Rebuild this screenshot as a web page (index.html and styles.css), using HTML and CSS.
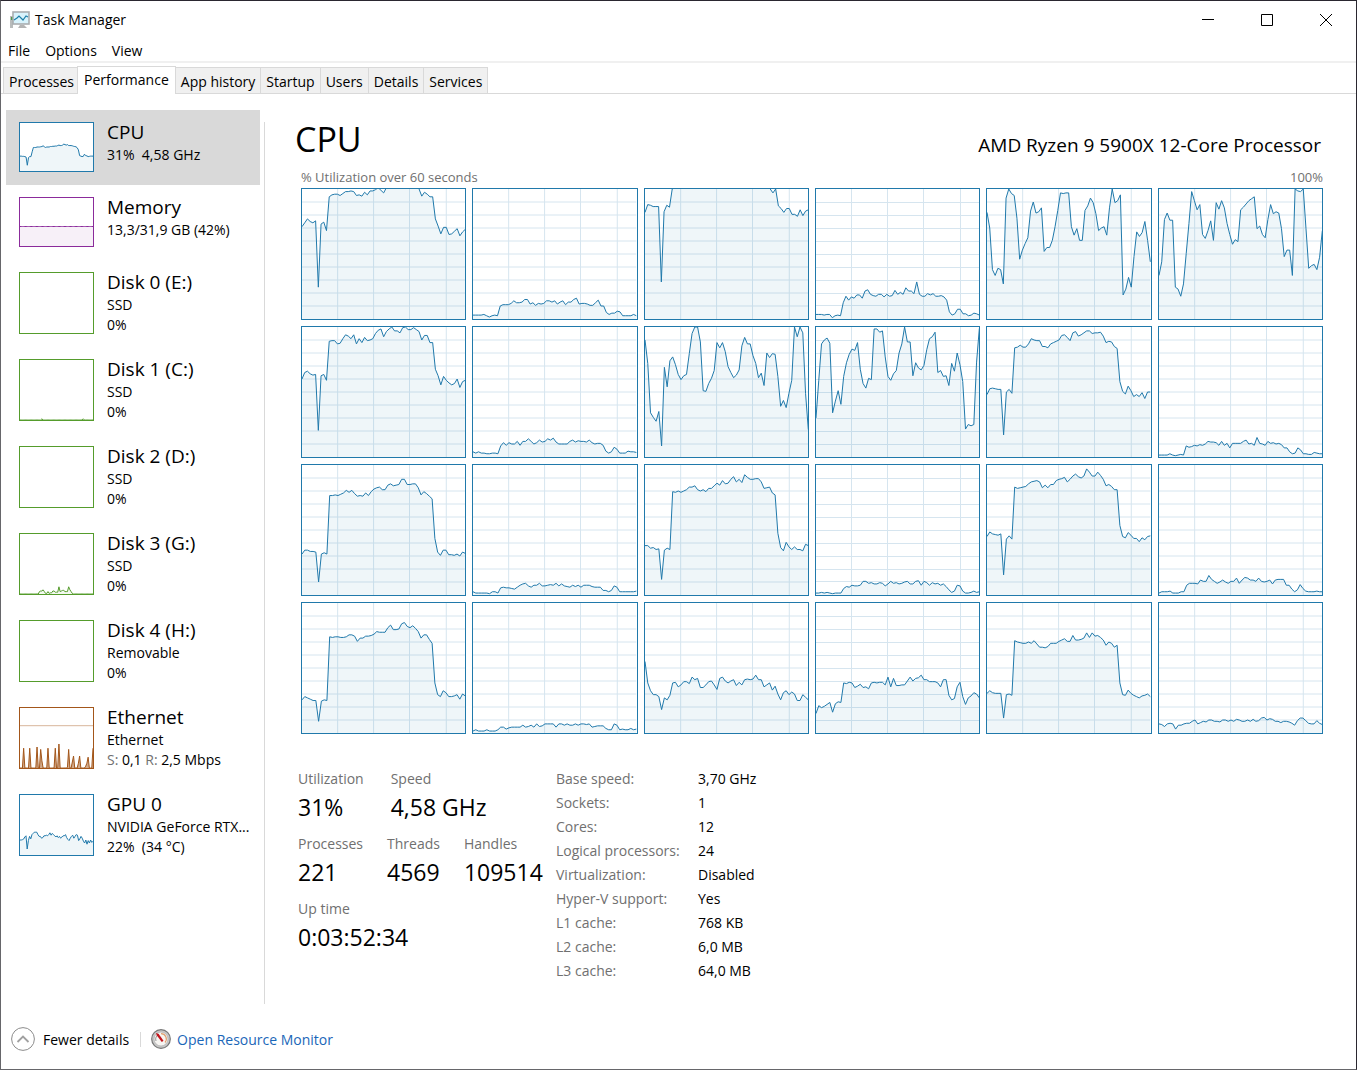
FILE: index.html
```html
<!DOCTYPE html>
<html lang="en">
<head>
    <meta charset="utf-8">
    <meta name="viewport" content="width=device-width, initial-scale=1.0">
    <title>Task Manager</title>
    <link rel="stylesheet" href="styles.css">
</head>
<body>
<div class="window">
    <header class="titlebar">
        <svg class="app-icon" width="20" height="18" viewBox="0 0 20 18">
            <rect x="0" y="5" width="3" height="12" fill="#b9bcbc"/>
            <rect x="1" y="6" width="2" height="3" fill="#4f9a4a"/>
            <path d="M8 17l2-3h4l3 3z" fill="#b4b4b4"/>
            <rect x="3" y="1" width="16" height="12" fill="#d8f3fc" stroke="#a9adb0" stroke-width="1.6"/>
            <path d="M4 9l3-2 2-2 4 4 3-4 2 1" fill="none" stroke="#1c7fa8" stroke-width="1.2"/>
        </svg>
        <span>Task Manager</span>
        <div class="controls">
            <button aria-label="Minimize"><svg width="12" height="12"><path d="M0 5.5h12"/></svg></button>
            <button aria-label="Maximize"><svg width="12" height="12"><path d="M.5.5h11v11H.5z"/></svg></button>
            <button aria-label="Close"><svg width="12" height="12"><path d="M0 0l12 12M12 0L0 12"/></svg></button>
        </div>
    </header>

    <nav class="menu">
        <button>File</button>
        <button>Options</button>
        <button>View</button>
    </nav>

    <div class="tabs" role="tablist">
        <button role="tab">Processes</button>
        <button role="tab" class="active" aria-selected="true">Performance</button>
        <button role="tab">App history</button>
        <button role="tab">Startup</button>
        <button role="tab">Users</button>
        <button role="tab">Details</button>
        <button role="tab">Services</button>
    </div>

    <div class="content">
        <aside class="sidebar">
            <button class="item selected">
                <svg class="thumb short blue" data-graph="cpu"></svg>
                <span class="info"><span class="name">CPU</span><span>31%&nbsp; 4,58 GHz</span></span>
            </button>
            <button class="item">
                <svg class="thumb short purple" data-graph="memory"></svg>
                <span class="info"><span class="name">Memory</span><span>13,3/31,9 GB (42%)</span></span>
            </button>
            <button class="item">
                <svg class="thumb green"></svg>
                <span class="info"><span class="name">Disk 0 (E:)</span><span>SSD</span><span>0%</span></span>
            </button>
            <button class="item">
                <svg class="thumb green" data-graph="disk1"></svg>
                <span class="info"><span class="name">Disk 1 (C:)</span><span>SSD</span><span>0%</span></span>
            </button>
            <button class="item">
                <svg class="thumb green"></svg>
                <span class="info"><span class="name">Disk 2 (D:)</span><span>SSD</span><span>0%</span></span>
            </button>
            <button class="item">
                <svg class="thumb green" data-graph="disk3"></svg>
                <span class="info"><span class="name">Disk 3 (G:)</span><span>SSD</span><span>0%</span></span>
            </button>
            <button class="item">
                <svg class="thumb green"></svg>
                <span class="info"><span class="name">Disk 4 (H:)</span><span>Removable</span><span>0%</span></span>
            </button>
            <button class="item">
                <svg class="thumb brown" data-graph="ethernet"></svg>
                <span class="info"><span class="name">Ethernet</span><span>Ethernet</span><span><i>S:</i> 0,1 <i>R:</i> 2,5 Mbps</span></span>
            </button>
            <button class="item">
                <svg class="thumb blue" data-graph="gpu"></svg>
                <span class="info"><span class="name">GPU 0</span><span>NVIDIA GeForce RTX...</span><span>22%&nbsp; (34 °C)</span></span>
            </button>
        </aside>

        <main class="main">
            <div class="heading">
                <h1>CPU</h1>
                <h2>AMD Ryzen 9 5900X 12-Core Processor</h2>
            </div>
            <div class="scale">
                <span>% Utilization over 60 seconds</span>
                <span>100%</span>
            </div>
            <div class="cores" id="cores"></div>

            <div class="details">
                <div class="stats">
                    <div class="stats-row">
                        <dl><dt>Utilization</dt><dd>31%</dd></dl>
                        <dl><dt>Speed</dt><dd>4,58 GHz</dd></dl>
                    </div>
                    <div class="stats-row">
                        <dl><dt>Processes</dt><dd>221</dd></dl>
                        <dl><dt>Threads</dt><dd>4569</dd></dl>
                        <dl><dt>Handles</dt><dd>109514</dd></dl>
                    </div>
                    <div class="stats-row">
                        <dl><dt>Up time</dt><dd>0:03:52:34</dd></dl>
                    </div>
                </div>
                <table class="specs">
                    <tr><th scope="row">Base speed:</th><td>3,70 GHz</td></tr>
                    <tr><th scope="row">Sockets:</th><td>1</td></tr>
                    <tr><th scope="row">Cores:</th><td>12</td></tr>
                    <tr><th scope="row">Logical processors:</th><td>24</td></tr>
                    <tr><th scope="row">Virtualization:</th><td>Disabled</td></tr>
                    <tr><th scope="row">Hyper-V support:</th><td>Yes</td></tr>
                    <tr><th scope="row">L1 cache:</th><td>768 KB</td></tr>
                    <tr><th scope="row">L2 cache:</th><td>6,0 MB</td></tr>
                    <tr><th scope="row">L3 cache:</th><td>64,0 MB</td></tr>
                </table>
            </div>
        </main>
    </div>

    <footer class="footer">
        <button class="fewer">
            <svg width="24" height="24" viewBox="0 0 24 24" fill="none">
                <circle cx="12" cy="12" r="11.4" stroke="#8c8c8c"/>
                <path d="M6.500 15l5.500-5.500 5.500 5.500" stroke="#a0a0a0" stroke-width="1.8"/>
            </svg>
            <span>Fewer details</span>
        </button>
        <a class="resmon" href="#">
            <svg width="20" height="20" viewBox="0 0 20 20">
                <circle cx="10" cy="10" r="9.300" fill="#c9c9c9" stroke="#777" stroke-width="1.2"/>
                <circle cx="10" cy="10" r="7" fill="#f7f5f2" stroke="#a5a5a5" stroke-width=".6"/>
                <path d="M5 12a5.300 5.300 0 0 1 3-6.800" fill="none" stroke="#999" stroke-width="1"/>
                <path d="M10 4.700a5.300 5.300 0 0 1 4 8.800" fill="none" stroke="#e0a070" stroke-width="1.2"/>
                <path d="M5 4l2.500.800 5 7-1.700 1.200-5-6.500z" fill="#c3141c"/>
            </svg>
            <span>Open Resource Monitor</span>
        </a>
    </footer>
</div>
<script src="graphs.js"></script>
</body>
</html>
```
FILE: styles.css
```css
* {
    box-sizing: border-box;
}

body {
    margin: 0;
    font-family: "Open Sans", "Segoe UI", sans-serif;
    font-size: 14px;
    line-height: 20px;
    color: #000;
    background: #fff;
}

button {
    font: inherit;
    color: inherit;
    background: none;
    border: 0;
    padding: 0;
    text-align: left;
}

h1, h2, dl, dd {
    margin: 0;
    font-weight: normal;
}

.window {
    display: flex;
    flex-direction: column;
    min-height: 100vh;
    border: 1px solid #2a2730;
    border-left-color: #66666a;
    border-bottom-color: #66666a;
}

/* title bar and menu */

.titlebar, .menu, .tabs, .controls, .content, .item, .info,
.heading, .scale, .details, .stats, .stats-row, .footer, .fewer, .resmon {
    display: flex;
}

.titlebar {
    align-items: center;
    height: 37px;
    padding: 0 1px 0 9px;
    gap: 5px;
}

.controls {
    margin-left: auto;
}

.controls button {
    display: flex;
    align-items: center;
    justify-content: center;
    width: 59px;
    height: 37px;
}

.controls svg {
    fill: none;
    stroke: #000;
}

.menu {
    gap: 15px;
    height: 25px;
    padding: 3px 7px 0;
    border-bottom: 2px solid #f0f0f0;
}

/* tabs */

.tabs {
    align-items: flex-end;
    height: 31px;
    padding-left: 2px;
    border-bottom: 1px solid #d9d9d9;
}

.tabs button {
    height: 26px;
    padding: 2px 5px 0;
    border: 1px solid #d9d9d9;
    border-left-width: 0;
    border-bottom: 0;
    background: #f0f0f0;
}

.tabs button:first-child {
    padding-right: 3px;
    border-left-width: 1px;
    border-right-width: 0;
}

.tabs .active {
    height: 28px;
    padding: 0 6px 2px;
    margin-bottom: -1px;
    border-left-width: 1px;
    background: #fff;
}

/* left column */

.content {
    flex: 1;
    padding-top: 16px;
}

.sidebar {
    width: 254px;
    margin: 0 4px 0 5px;
    flex-shrink: 0;
}

.item {
    width: 100%;
    gap: 13px;
    padding: 9px 0 13px 13px;
    align-items: flex-start;
}

.selected {
    background: #d9d9d9;
}

.info {
    flex-direction: column;
    margin-bottom: -1px;
    white-space: nowrap;
}

.name {
    font-size: 19px;
    line-height: 26px;
}

.info i {
    font-style: normal;
    color: #707070;
}

.thumb {
    width: 75px;
    height: 62px;
    margin-top: 3px;
    flex-shrink: 0;
    border: 1px solid;
    background: #fff;
}

.short {
    height: 50px;
}

.blue {
    color: #2079ab;
}

.purple {
    color: #8b2b9b;
}

.green {
    color: #559c2c;
}

.brown {
    color: #a3561a;
}

/* graphs */

.line {
    fill: none;
    stroke: currentColor;
    vector-effect: non-scaling-stroke;
}

.area {
    fill: currentColor;
    fill-opacity: 0.07;
}

.brown .area {
    fill-opacity: 0.5;
}

.limit {
    stroke: #d8b59a;
    vector-effect: non-scaling-stroke;
}

.cores {
    display: grid;
    grid-template-columns: repeat(6, 1fr);
    grid-auto-rows: 132px;
    gap: 6px;
    margin: 2px 0 0 5px;
}

.core {
    width: 100%;
    height: 100%;
    border: 1px solid;
}

.grid {
    fill: none;
    stroke: #d6e5ef;
    shape-rendering: crispEdges;
    vector-effect: non-scaling-stroke;
}

/* right side */

.main {
    flex: 1;
    margin-top: 12px;
    padding: 0 33px 0 30px;
    border-left: 1px solid #d9d9d9;
}

.heading {
    justify-content: space-between;
    align-items: baseline;
    padding-right: 2px;
}

.heading h1 {
    font-size: 34px;
    line-height: 34px;
}

.heading h2 {
    font-size: 19px;
    line-height: 20px;
}

.scale {
    justify-content: space-between;
    margin: 12px 0 0 6px;
    font-size: 13px;
    line-height: 18px;
    color: #707070;
}

.cores {
    margin: 2px 0 0 6px;
}

.details {
    margin: 33px 0 0 3px;
}

.stats {
    flex-direction: column;
    gap: 9px;
    width: 258px;
}

.stats-row {
    gap: 24px;
}

.stats-row:first-child {
    gap: 27px;
}

dt, th {
    color: #707070;
}

dt {
    line-height: 24px;
}

dd {
    font-size: 23px;
    line-height: 32px;
}

.specs {
    border-collapse: collapse;
    line-height: 24px;
}

.specs th {
    width: 142px;
    padding: 0;
    font-weight: normal;
    text-align: left;
}

.specs td {
    padding: 0;
}

/* bottom bar */

.footer {
    align-items: center;
    height: 65px;
    padding: 5px 10px 0;
}

.footer span {
    padding-top: 2px;
}

.fewer, .resmon {
    align-items: center;
    gap: 8px;
}

.fewer {
    padding-right: 12px;
    margin-right: 10px;
    background: linear-gradient(#d9d9d9, #d9d9d9) right / 1px 15px no-repeat;
}

.resmon {
    gap: 6px;
    color: #1a66b8;
    text-decoration: none;
}
```
FILE: graphs.js
```js
// utilization in percent, oldest sample first, one row per logical processor
const cores = [
    [71,74,77,75,74,75.5,24.5,73,74.5,68,94,95.5,96,96,95,96.5,98,98,98.5,98,95,95.5,94.5,97.5,95.5,98.5,98.5,99.5,101,99,97,101,102,102,102,102,102,102,102,102,102,102,102,100,94.5,97.5,96,94,94,77,71.5,65.5,70.5,70.5,65,65.5,67.5,69.5,64,67,69],
    [3,3,3,3,3.5,2.5,1.5,2.5,3,2.5,10,11,11,11,12,14,12.5,12.5,13,15,15,11.5,12.5,10.5,12,11.5,12,14,14,13,14,11.5,13,14,11,13,13,15,16,11.5,12,12,11.5,10.5,10.5,12.5,14.5,10,10,5,3.5,4.5,4.5,6,5.5,2.5,2.5,2.5,2.5,3.5,2.5],
    [82,88,87.5,86.5,86.5,86.5,28.5,82.5,87.5,86,100,102,102,102,102,102,102,102,102,102,102,102,102,102,102,102,102,102,102,102,102,102,102,102,102,102,102,102,102,102,102,102,102,102,102,102,100,97,100,87,85,82,85,85,80.5,80.5,79,84,79.5,83,84],
    [3.5,3.5,3.5,3,3.5,3.5,1,2.5,3,2.5,12.5,17.5,14.5,17,16,18.5,18.5,16,21.5,22.5,19,18,17.5,19,19,17,19,17.5,18,22,19,20.5,19,24,21.5,21.5,19.5,28.5,19,17.5,17.5,19.5,18.5,19.5,17.5,17.5,18,17,14.5,5.5,3,4,7.5,7.5,4,4,2.5,3,4.5,4,3],
    [82,70,38,33.5,39,38,27,93,100,96.5,95,77.5,46,53,58,62.5,83,90,81.5,82.5,85.5,52,55,55,60.5,71,83.5,97,96.5,97,97,71,64.5,69.5,60.5,60.5,83.5,87,93,89.5,81,68,70,71,64.5,85.5,100,89.5,91,95.5,18.5,23,32,24.5,48,67,63.5,66.5,75,60.5,44],
    [33.5,44,76.5,81.5,76,76,24.5,23,17.5,27,50.5,73.5,98,91,84,88,65,62,68,75.5,60.5,89.5,84.5,91,85.5,73.5,65,57.5,61,59.5,84,86,88.5,91,92.5,94,69.5,71.5,65,62.5,76.5,88,81,82.5,81.5,69.5,48,53,53,33.5,100,98.5,98,100,69.5,39,41,42,38,47.5,68],
    [60,65,66,64,63,63.5,20.5,62.5,63.5,59,89,89.5,89.5,87,87.5,91,94,93,91,94,87,91,88,92,89.5,90,91,95,97.5,98.5,92.5,96.5,98.5,100,97,97,95.5,99.5,100,98,98,99.5,98,96.5,90,93.5,93.5,88,88,67.5,62.5,55.5,62,59,57,55.5,56.5,60,53.5,58,59],
    [4,3,4,3,3,2.5,2.5,3,3,2.5,8.5,11,9,11,10,10,12,9,12,12,14,12,10,11,13,11.5,12,14,13,14.5,11.5,10,10,10,10,12,13,11.5,12.5,12,12,11.5,13,11,10,10.5,10.5,9,4.5,3,4,7.5,6,3,3,3,4.5,4,4,3.5],
    [90,72,34,30.5,27.5,35,8.5,69,54,74,77,71,63.5,59.5,62.5,63.5,79.5,95,100,100,88.5,51,50.5,56.5,60.5,66.5,88,84,88,81,69.5,65,61,63,67,85.5,92,87,87,78,72,61,64.5,55,80,76.5,79.5,79,62,39,43.5,38,49,59,100,92.5,100,95.5,49,21],
    [30,59,87,90,91.5,87.5,34,43,51,40.5,62,72.5,79,83,82,88,67.5,56.5,53,60.5,59.5,98.5,98.5,96,97,77,62,59,64,66.5,80,87,100,88.5,88.5,62.5,72.5,68.5,67,70.5,82.5,91,92.5,96,65,66.5,62,62.5,55,72,66,80,71,58,21.5,25,24,25,73,99],
    [48,52.5,53,52.5,52,52,17,50,52,49,84,84.5,86,84.5,84.5,87,91,90,89.5,89.5,85,85,84,87,88,89,90,93.5,94,92,89.5,95.5,96.5,93,94,95.5,97,97,95,95.5,95.5,96,93,88,89,88.5,85,83.5,58,50.5,48.5,54.5,51,46.5,48,46.5,49.5,45,50,50],
    [1.5,1.5,1.5,1.5,2.5,1.5,1,1.5,2,1.5,8.5,7.5,8,9,8.5,9.5,9,10,12,11.5,11.5,11,9,12,9,10.5,7,10.5,10.5,10.5,10.5,12,13,10,10.5,9,15,10.5,10,9,12,10.5,11,10,10.5,9.5,7,7,4,2.5,3,7,5.5,2.5,2.5,2,2,3.5,3,2.5,2.5],
    [31.5,34.5,34.5,33.5,33.5,33,10,31.5,32.5,31.5,76.5,76.5,77,76.5,77.5,78.5,80.5,79,80.5,78,76,76.5,76,78.5,76.5,79.5,81.5,82.5,83,81,81,84.5,85.5,84,84.5,85,89,89,85,85,85.5,85.5,82.5,77,79.5,78,76,74,43.5,33,30.5,34.5,34.5,31,31,30.5,31.5,30,33,32],
    [2.5,1.5,1.5,1.5,1.5,1.5,1,2.5,2.5,1.5,5.5,6,5.5,5.5,5,4.5,6,7.5,8.5,9,7,6,7.5,7.5,9,7,7,7.5,8,7.5,9,7,8.5,7,6.5,6,7.5,6.5,7.5,6,7.5,7.5,7.5,6.5,6,6,6,3.5,3.5,2.5,3.5,7,6,2.5,2.5,2.5,2.5,2.5,2.5,3],
    [38,38,36,36.5,35,35.5,12,34.5,36,35,79.5,79,80,79,80,81,83,83,84,81,80,81,79.5,82,82,84,86,84.5,88,85.5,86,89,91,87,89,86.5,92.5,90.5,89,89,89.5,89.5,87,82,82.5,83,78.5,77,47.5,36.5,34,40.5,37,35,37,35,35,34,39,38],
    [1.5,1.5,2,1.5,2,1.5,1,1.5,1.5,1.5,5,6.5,6,7.5,7,7,7.5,10.5,10.5,9,9.5,8.5,8.5,9.5,9,7,8.5,10.5,9,9.5,8.5,9,10,10.5,8.5,8.5,10.5,11,7.5,10.5,9.5,7.5,9.5,8.5,9,7.5,8.5,6.5,4,2,3,7.5,7,3,1.5,1.5,2,3,2,2.5],
    [45,48.5,47,46.5,46,47,15.5,43,45.5,43,83,82,82.5,83,83.5,85.5,87,87.5,88,87,82.5,84.5,82.5,85,85,88,89,89.5,90.5,87,89,91.5,93,91,90,91.5,97,94.5,91.5,91.5,94.5,92,89,84,85,83.5,81,81,53.5,45,44,48,46,43.5,43.5,41,44,42.5,45,45.5],
    [1.5,2.5,2.5,2.5,3,1.5,1.5,1.5,2.5,2.5,7.5,9,9,9,8.5,11.5,10.5,10.5,15,12,10.5,9,10,11.5,10,9,10.5,10.5,13,9,11.5,13.5,13,11.5,11.5,10.5,13,10.5,10,10.5,11.5,8.5,11.5,12,12,12,7.5,7.5,4.5,2.5,4,8,5,3,2.5,2.5,2.5,3,2.5,2.5],
    [25.5,28,27,26,25,25,9,24.5,25.5,25,74,73.5,74,74,73.5,73.5,74,75.5,75.5,74.5,70.5,73,73,74.5,74.5,75,76,78,77.5,77.5,77.5,81,83,79.5,79.5,80,84,85,82,81,82.5,80.5,78,73,75.5,75.5,72,69,38.5,29.5,28,32.5,31,28,28,28.5,29.5,26,30,28.5],
    [1.5,2.5,1.5,1.5,1.5,2.5,1.5,1.5,1.5,2.5,4.5,4.5,3,4,4.5,4.5,4.5,4.5,6,4.5,5,6,4.5,7,5,5.5,7,7,7,7,4.5,7,7,6,7,6,6,7,6,7,7,6.5,7,4.5,5,5.5,5.5,5.5,3.5,2.5,2.5,7,6,2.5,3,2.5,2.5,3.5,2.5,3],
    [55,38.5,32.5,29.5,29.5,28,18,27,25.5,29,38.5,39,35.5,37,39.5,39.5,38,43,41,42,35,35,37,39.5,40,37,33.5,42,43,40,38.5,40,41,36.5,39,37,41,41.5,41,41.5,44.5,41,41,35.5,37,38.5,33,36,30,25.5,31,32.5,29.5,31.5,30,25,25,29.5,27.5,25.5],
    [15,21,19.5,20.5,22,23.5,16,22.5,24,23.5,38.5,38,39,38.5,35,36,37.5,35,35.5,34,38.5,39,38.5,39,39,37,43,35.5,42,36.5,36.5,37,37,40,43,40,42,42.5,44.5,41,41,39.5,39.5,39.5,38.5,35.5,41,41,29,25.5,26.5,35.5,39,28,22,27,28.5,31,30,27],
    [30.5,32.5,31,30.5,30.5,30.5,11.5,29.5,30,29,71,70,69.5,69,69,70,69,71,68.5,66,66,65.5,66.5,69,69,69,70.5,71.5,72.5,70.5,70.5,75,71.5,71.5,72,73,77,73.5,77,74.5,75,73.5,71.5,67.5,70,69,66,67.5,38.5,29.5,29,33,30.5,29,28,27,28.5,29,30,28],
    [7,6.5,5,7,7.5,7,3,6,6,7,7.5,7.5,9,10,7,8,9,8.5,10,10,9,9,8.5,10,10,9,10,9,10.5,10,9,9,10,9,10.5,9,9.5,11.5,12,10,11,10.5,9,9,8,9,9,8.5,7.5,6,9.5,11.5,11.5,9.5,7.5,7,7,9.5,7.5,6.5]
];

// sparse series for a thumbnail: sample index -> value, the rest is zero
function spikes(values) {
    const list = Array(61).fill(0);
    for (const i in values) {
        list[i] = values[i];
    }
    return list;
}

const thumbs = {
    cpu: [31,31,30.5,30.5,30,29,12,28,30,30,40,49,49,49,50,50,50,50.5,51,52.5,50.5,49,50,50,50,51,51,51.5,51.5,52,52,53,54,53,53,54,56,55,54,55,53,53,53,52.5,51.5,51,50.5,48.5,44,32,31,30,30.5,35,32,31.5,30,30.5,31,31,31],
    memory: Array(61).fill(40.6),
    disk1: spikes({18: 2, 52: 2}),
    disk3: spikes({16: 4, 17: 5, 18: 5, 19: 7, 20: 4, 21: 1, 22: 1, 23: 4, 24: 1, 25: 2, 26: 2, 27: 5, 28: 5, 29: 3, 30: 3, 31: 3, 32: 12, 33: 4, 34: 5, 35: 6, 36: 6, 37: 4, 38: 4, 39: 4, 40: 12, 41: 7, 42: 4, 43: 1}),
    ethernet: spikes({3: 33, 8: 33, 14: 35, 17: 31, 18: 12, 23: 33, 29: 33, 32: 40, 39: 1, 40: 31, 43: 10, 44: 20, 48: 8, 49: 20, 54: 3, 55: 8, 56: 18, 60: 33}),
    gpu: [25,25,25.5,26.5,30,32,10,24,31,27,34,36,38,38,38,34,31,31,28,29,32,32,33,32,34,37,33,36,34,32,30,32,29,31,28,30,32,32,34,29,26,24,28,31,33,28,31,34,33,24,27,31,28,23,20,25,18,24,20,25,21,23]
};

function plot(values) {
    const points = values.map((v, i) => `${(i * 60 / (values.length - 1)).toFixed(2)},${100 - v}`).join(' ');
    return `<polygon class="area" points="0,100 ${points} 60,100"/><polyline class="line" points="${points}"/>`;
}

function gridLines() {
    let d = '';
    for (const x of [13.1, 26.3, 39.5, 53]) {
        d += `M${x} 0V100`;
    }
    for (let y = 10; y < 100; y += 10) {
        d += `M0 ${y}H60`;
    }
    return `<path class="grid" d="${d}"/>`;
}

document.getElementById('cores').innerHTML = cores.map(values =>
    `<svg class="core blue" viewBox="0 0 60 100" preserveAspectRatio="none">${gridLines()}${plot(values)}</svg>`
).join('');

document.querySelectorAll('[data-graph]').forEach(svg => {
    svg.setAttribute('viewBox', '0 0 60 100');
    svg.setAttribute('preserveAspectRatio', 'none');
    svg.innerHTML = plot(thumbs[svg.dataset.graph]);
    if (svg.dataset.graph === 'ethernet') {
        svg.innerHTML += '<path class="limit" d="M0 29.500H60"/>';
    }
});
```
